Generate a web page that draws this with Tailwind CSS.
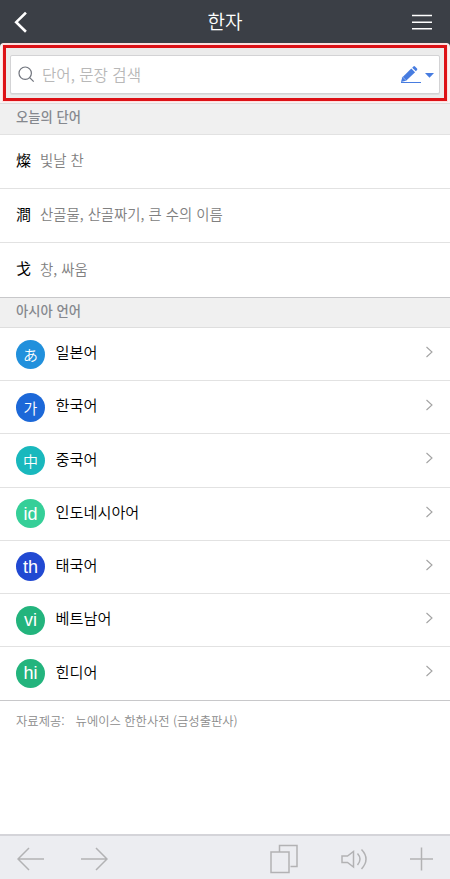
<!DOCTYPE html>
<html lang="ko">
<head>
<meta charset="utf-8">
<title>한자</title>
<script src="https://cdn.jsdelivr.net/npm/@tailwindcss/browser@4"></script>
</head>
<body class="h-[879px] w-[450px] overflow-hidden bg-white font-['Noto_Sans_CJK_KR','Noto_Sans',sans-serif] text-black">
<div class="flex h-full flex-col">
  <header class="flex h-[43px] shrink-0 items-center justify-between bg-[#3b3f46] pl-[14px] pr-[18px] text-white">
    <svg class="h-[22px] w-[20px]" viewBox="0 0 20 22" fill="none" stroke="currentColor" stroke-width="2.6" stroke-linecap="square"><path d="M11 2.500 2.200 11.200 11 19.800"/></svg>
    <h1 class="pb-[2px] pl-[4px] text-[19px] leading-[41px] font-[350]">한자</h1>
    <svg class="h-[16px] w-[20px]" viewBox="0 0 20 16" stroke="currentColor" stroke-width="1.5"><path d="M0 1.500h20M0 8.200h20M0 14.800h20"/></svg>
  </header>

  <div class="h-[60px] shrink-0 bg-[#3b3f46]">
    <div class="h-[60px] rounded-t-[4px] bg-[#fbf1f1] px-[2px]">
    <div class="h-[59px] rounded-t-[3px] bg-[#ffdede] px-px pt-[2px] pb-px">
      <div class="h-[56px] border-[3px] border-[#dd1116] bg-[#ececec] px-[4px] pt-[7px]">
        <div class="flex h-[39px] items-center rounded-[2px] border border-[#d3d3d5] bg-white pl-[7px] pr-[5px] shadow-[0_1px_0_#dedede]">
          <svg class="h-[17px] w-[17px]" viewBox="0 0 17 17" fill="none" stroke="#70747d" stroke-width="1.2"><circle cx="7.2" cy="7.2" r="6.2"/><path d="m11.700 11.700 4 4"/></svg>
          <span class="ml-[7px] grow text-[15.6px] leading-[37px] font-[350] text-[#b8b8b8]">단어, 문장 검색</span>
          <svg class="h-[19px] w-[34px]" viewBox="0 0 34 19"><path d="m1 17 1.200-4.600L11.300 3.500l3.800 3.800-9 8.500z" fill="#477ce0"/><path d="m12.200 2.700 1.200-1.200q.8-.8 1.600 0L17 3.500q.8.8 0 1.600l-1.100 1.200z" fill="#477ce0"/><path d="m2.600 12 3.700 3.700" stroke="#a8c0f0" stroke-width=".8"/><path d="M1 17.500h20" stroke="#477ce0" stroke-width="1"/><path d="M25 8h9l-4.500 4.800z" fill="#477ce0"/></svg>
        </div>
      </div>
    </div>
    </div>
  </div>

  <h2 class="h-[31.5px] shrink-0 border-y border-t-[#dedede] border-b-[#e2e2e2] bg-[#f0f0f0] pl-[16px] text-[13.3px] leading-[26px] font-medium text-[#85888e]">오늘의 단어</h2>
  <ul class="shrink-0">
    <li class="flex h-[54px] items-center border-b border-[#e2e2e2] pb-[2px] pl-[16px]"><span class="w-[24px] text-[15px]">燦</span><span class="text-[14.4px] font-[350] text-[#808080]">빛날 찬</span></li>
    <li class="flex h-[54px] items-center border-b border-[#e2e2e2] pb-[2px] pl-[16px]"><span class="w-[24px] text-[15px]">澗</span><span class="text-[14.4px] font-[350] text-[#808080]">산골물, 산골짜기, 큰 수의 이름</span></li>
    <li class="flex h-[54px] items-center pb-[2px] pl-[16px]"><span class="w-[24px] text-[15px]">戈</span><span class="text-[14.4px] font-[350] text-[#808080]">창, 싸움</span></li>
  </ul>

  <h2 class="h-[31.5px] shrink-0 border-y border-t-[#c8c8ca] border-b-[#dedede] bg-[#f0f0f0] pl-[16px] text-[13.3px] leading-[25px] font-medium text-[#85888e]">아시아 언어</h2>
  <ul class="shrink-0">
    <li class="flex h-[53.2px] items-center border-b border-[#e2e2e2] pl-[16px] pr-[17px]"><span class="grid size-[29px] place-items-center rounded-full bg-[#2190dc] text-[15px] leading-none font-[350] text-white">あ</span><span class="grow pb-[5px] pl-[10.5px] text-[15.2px] font-[350]">일본어</span><svg class="mb-[4px] h-[12px] w-[7px]" viewBox="0 0 7 12" fill="none" stroke="#a3a3a3" stroke-width="1.1"><path d="m.5 1 5.500 5-5.500 5"/></svg></li>
    <li class="flex h-[53.2px] items-center border-b border-[#e2e2e2] pl-[16px] pr-[17px]"><span class="grid size-[29px] place-items-center rounded-full bg-[#1c68d8] text-[15px] leading-none font-[350] text-white">가</span><span class="grow pb-[5px] pl-[10.5px] text-[15.2px] font-[350]">한국어</span><svg class="mb-[4px] h-[12px] w-[7px]" viewBox="0 0 7 12" fill="none" stroke="#a3a3a3" stroke-width="1.1"><path d="m.5 1 5.500 5-5.500 5"/></svg></li>
    <li class="flex h-[53.2px] items-center border-b border-[#e2e2e2] pl-[16px] pr-[17px]"><span class="grid size-[29px] place-items-center rounded-full bg-[#19b8bd] text-[15px] leading-none font-[350] text-white">中</span><span class="grow pb-[5px] pl-[10.5px] text-[15.2px] font-[350]">중국어</span><svg class="mb-[4px] h-[12px] w-[7px]" viewBox="0 0 7 12" fill="none" stroke="#a3a3a3" stroke-width="1.1"><path d="m.5 1 5.500 5-5.500 5"/></svg></li>
    <li class="flex h-[53.2px] items-center border-b border-[#e2e2e2] pl-[16px] pr-[17px]"><span class="grid size-[29px] place-items-center rounded-full bg-[#35cf98] font-['Liberation_Sans',sans-serif] text-[18px] leading-none text-white">id</span><span class="grow pb-[5px] pl-[10.5px] text-[15.2px] font-[350]">인도네시아어</span><svg class="mb-[4px] h-[12px] w-[7px]" viewBox="0 0 7 12" fill="none" stroke="#a3a3a3" stroke-width="1.1"><path d="m.5 1 5.500 5-5.500 5"/></svg></li>
    <li class="flex h-[53.2px] items-center border-b border-[#e2e2e2] pl-[16px] pr-[17px]"><span class="grid size-[29px] place-items-center rounded-full bg-[#2149d2] font-['Liberation_Sans',sans-serif] text-[18px] leading-none text-white">th</span><span class="grow pb-[5px] pl-[10.5px] text-[15.2px] font-[350]">태국어</span><svg class="mb-[4px] h-[12px] w-[7px]" viewBox="0 0 7 12" fill="none" stroke="#a3a3a3" stroke-width="1.1"><path d="m.5 1 5.500 5-5.500 5"/></svg></li>
    <li class="flex h-[53.2px] items-center border-b border-[#e2e2e2] pl-[16px] pr-[17px]"><span class="grid size-[29px] place-items-center rounded-full bg-[#23b47d] font-['Liberation_Sans',sans-serif] text-[18px] leading-none text-white">vi</span><span class="grow pb-[5px] pl-[10.5px] text-[15.2px] font-[350]">베트남어</span><svg class="mb-[4px] h-[12px] w-[7px]" viewBox="0 0 7 12" fill="none" stroke="#a3a3a3" stroke-width="1.1"><path d="m.5 1 5.500 5-5.500 5"/></svg></li>
    <li class="flex h-[53.6px] items-center border-b border-[#c8c8ca] pl-[16px] pr-[17px]"><span class="grid size-[29px] place-items-center rounded-full bg-[#23b47d] font-['Liberation_Sans',sans-serif] text-[18px] leading-none text-white">hi</span><span class="grow pb-[5px] pl-[10.5px] text-[15.2px] font-[350]">힌디어</span><svg class="mb-[4px] h-[12px] w-[7px]" viewBox="0 0 7 12" fill="none" stroke="#a3a3a3" stroke-width="1.1"><path d="m.5 1 5.500 5-5.500 5"/></svg></li>
  </ul>

  <p class="flex grow gap-[11px] pt-[10px] pl-[16px] text-[12.3px] leading-[20px] font-[350] text-[#8c8c8c]"><span>자료제공:</span><span>뉴에이스 한한사전 (금성출판사)</span></p>

  <nav class="flex h-[45px] shrink-0 items-center border-t-2 border-[#d4d4d9] bg-[#ecedf1] pt-[2px] pl-[17px] text-[#b2b2b4]">
    <svg class="h-[24px] w-[27px]" viewBox="0 0 27 24" fill="none" stroke="currentColor" stroke-width="1.5"><path d="M27 12H1M12 1 1 12l11 11"/></svg>
    <svg class="ml-[37px] h-[24px] w-[27px]" viewBox="0 0 27 24" fill="none" stroke="currentColor" stroke-width="1.5"><path d="M0 12h26M15 1l11 11-11 11"/></svg>
    <svg class="ml-[162px] h-[30px] w-[28px]" viewBox="0 0 28 30" fill="none" stroke="currentColor" stroke-width="1.5"><path d="M1 8h18v20.500H1zM9.500 8V1.500h17.500V22.500H20.500"/></svg>
    <svg class="ml-[43px] h-[24px] w-[27px]" viewBox="0 0 27 24" fill="none" stroke="currentColor" stroke-width="1.500"><path d="M1 9h5.500L12.500 4.500v15.500L6.500 15.500H1zM16.500 6.500q5 5.500 0 11.500M20.500 2.500q9 9.500 0 19.500"/></svg>
    <svg class="ml-[42px] h-[24px] w-[23px]" viewBox="0 0 23 24" fill="none" stroke="currentColor" stroke-width="1.5"><path d="M0 12h23M11.500 .5v23"/></svg>
  </nav>
</div>
</body>
</html>
